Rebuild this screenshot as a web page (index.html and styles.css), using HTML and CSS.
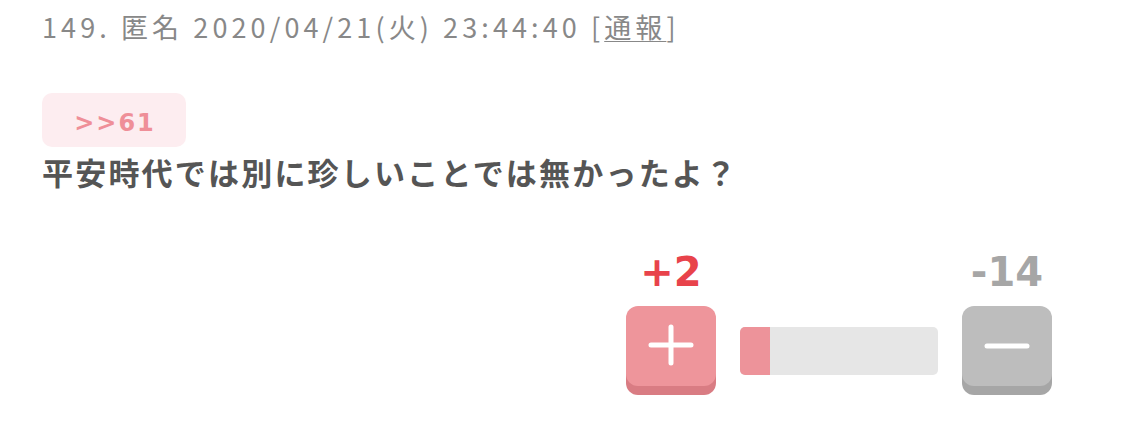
FILE: index.html
```html
<!DOCTYPE html>
<html lang="ja">
<head>
<meta charset="utf-8">
<link rel="stylesheet" href="styles.css">
</head>
<body>
<div class="post">
  <div class="post-head">149. 匿名 2020/04/21(火) 23:44:40 [<a class="report" href="#">通報</a>]</div>
  <div class="anchor">&gt;&gt;61</div>
  <div class="post-body">平安時代では別に珍しいことでは無かったよ？</div>
  <div class="vote">
    <div class="vote-col">
      <div class="count count-plus">+2</div>
      <div class="btn btn-plus">
        <svg width="46" height="46" viewBox="0 0 46 46"><path d="M23 4 V40 M3 22 H43" stroke="#fff" stroke-width="5" stroke-linecap="round" fill="none"/></svg>
      </div>
    </div>
    <div class="bar"><div class="bar-fill" style="width:15%"></div></div>
    <div class="vote-col">
      <div class="count count-minus">-14</div>
      <div class="btn btn-minus">
        <svg width="46" height="46" viewBox="0 0 46 46"><path d="M3 23 H43" stroke="#fff" stroke-width="5" stroke-linecap="round" fill="none"/></svg>
      </div>
    </div>
  </div>
</div>
</body>
</html>
```

FILE: styles.css
```css
html, body {
  margin: 0;
  padding: 0;
  background: #fff;
}

.post {
  padding: 9px 72px 0 42px;
  font-family: "Noto Sans CJK JP", sans-serif;
}

.post-head {
  font-size: 27px;
  line-height: 36px;
  letter-spacing: 4.1px;
  color: #888;
  white-space: nowrap;
}

.report {
  color: #888;
  text-decoration: underline;
  text-underline-offset: 3px;
  text-decoration-thickness: 1px;
}

.anchor {
  margin-top: 48px;
  width: 144px;
  height: 54px;
  box-sizing: border-box;
  padding: 5px 0 0 2px;
  display: flex;
  align-items: center;
  justify-content: center;
  background: #fdedf0;
  border-radius: 10px;
  font-family: "DejaVu Sans", Verdana, sans-serif;
  font-weight: bold;
  font-size: 24px;
  letter-spacing: 2px;
  color: #ef8f98;
}

.post-body {
  margin-top: 5px;
  font-size: 31px;
  line-height: 40px;
  font-weight: bold;
  letter-spacing: 2.2px;
  color: #555;
}

.vote {
  margin-top: 56px;
  display: flex;
  justify-content: flex-end;
  align-items: flex-end;
  gap: 24px;
}

.vote-col {
  width: 90px;
  display: flex;
  flex-direction: column;
  align-items: center;
}

.count {
  font-family: "DejaVu Sans", Verdana, sans-serif;
  font-weight: bold;
  font-size: 40px;
  line-height: 48px;
}

.count-plus { color: #e8434b; }
.count-minus { color: #a6a6a6; }

.btn {
  margin-top: 10px;
  margin-bottom: 9px;
  width: 90px;
  height: 80px;
  border-radius: 12px;
  display: flex;
  align-items: center;
  justify-content: center;
}

.btn-plus {
  background: #ee959b;
  box-shadow: 0 9px 0 #d97c83;
}

.btn-minus {
  background: #bdbdbd;
  box-shadow: 0 9px 0 #a6a6a6;
}

.bar {
  width: 198px;
  height: 48px;
  margin-bottom: 20px;
  background: #e6e6e6;
  border-radius: 5px;
  overflow: hidden;
  display: flex;
}

.bar-fill {
  background: #ed939a;
  height: 100%;
}
```
